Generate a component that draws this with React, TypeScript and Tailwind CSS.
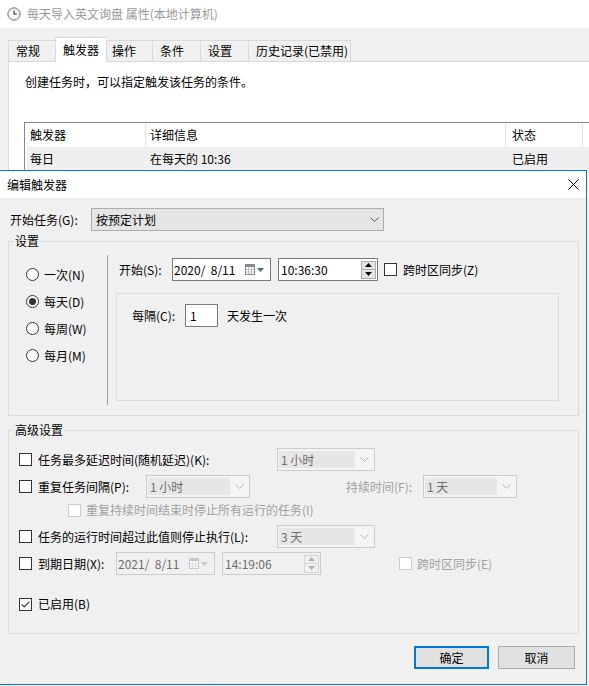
import React from "react";

const TABS = [
  { label: "常规", cls: "w-[47px] pl-[7px] border-l" },
  { label: "触发器", cls: "w-[51px] pl-[7px] border-l", active: true },
  { label: "操作", cls: "w-[46px] pl-[5px] border-l" },
  { label: "条件", cls: "w-[48px] pl-[7px] border-l" },
  { label: "设置", cls: "w-[48px] pl-[7px] border-l" },
  { label: "历史记录(已禁用)", cls: "w-[103px] pl-[7px] border-l border-r" },
];

const RADIOS = [
  { label: "一次(N)" },
  { label: "每天(D)", checked: true },
  { label: "每周(W)" },
  { label: "每月(M)" },
];

function ClockIcon() {
  return (
    <svg width="14" height="14" viewBox="0 0 14 14" className="shrink-0">
      <circle cx="7" cy="7" r="6.2" fill="#e9e3d6" stroke="#7d7d7d" />
      <circle cx="7" cy="7" r="4.6" fill="#ffffff" />
      <path d="M7 3.4V7H9.8" fill="none" stroke="#222222" strokeWidth="1.1" />
    </svg>
  );
}

function Chevron({ disabled }: { disabled?: boolean }) {
  return (
    <svg width="9" height="5" viewBox="0 0 9 5" className="shrink-0">
      <path d="M0.5 0.5L4.5 4.5L8.5 0.5" fill="none" stroke={disabled ? "#b4b4b4" : "#5a5a5a"} />
    </svg>
  );
}

function Check({ checked, disabled, className = "" }: { checked?: boolean; disabled?: boolean; className?: string }) {
  return (
    <span
      className={`w-[13px] h-[13px] border bg-white flex items-center justify-center shrink-0 ${
        disabled ? "border-[#cccccc]" : "border-[#333333]"
      } ${className}`}
    >
      {checked && (
        <svg width="9" height="7" viewBox="0 0 9 7">
          <path d="M0.6 3.4L3.2 6L8.4 0.6" fill="none" stroke="#333333" strokeWidth="1.1" />
        </svg>
      )}
    </span>
  );
}

function Radio({ checked }: { checked?: boolean }) {
  return (
    <span className="w-[13px] h-[13px] rounded-full border border-[#333333] bg-white flex items-center justify-center shrink-0">
      {checked && <span className="w-[7px] h-[7px] rounded-full bg-[#333333]" />}
    </span>
  );
}

function Combo({ value, width, disabled }: { value: string; width: string; disabled?: boolean }) {
  return (
    <div className={`${width} h-[23px] border border-[#cccccc] bg-[#f4f4f4] flex items-center py-[2px] pl-[1px] shrink-0`}>
      <div className="flex-1 h-full bg-[#e6e6e6] text-[#6d6d6d] flex items-center pl-[2px]">{value}</div>
      <div className="w-[19px] flex items-center justify-center">
        <Chevron disabled={disabled} />
      </div>
    </div>
  );
}

function CalIcon({ disabled }: { disabled?: boolean }) {
  const s = disabled ? "#c8c8c8" : "#8a8a8a";
  const g = disabled ? "#dedede" : "#b9c2cf";
  return (
    <svg width="10" height="11" viewBox="0 0 10 11" className="shrink-0">
      <rect x="0.5" y="0.5" width="9" height="10" fill="#ffffff" stroke={s} />
      <rect x="1" y="1" width="8" height="2" fill={s} />
      <path d="M3.5 3V10M6.5 3V10M1 5.5H9M1 8H9" stroke={g} />
    </svg>
  );
}

function DateBox({ value, disabled }: { value: string; disabled?: boolean }) {
  return (
    <div
      className={`w-[99px] h-[23px] border flex items-center pl-[1px] pr-[6px] shrink-0 ${
        disabled ? "border-[#cccccc] bg-[#f0f0f0] text-[#6d6d6d]" : "border-[#7a7a7a] bg-white"
      }`}
    >
      <span className="flex-1 whitespace-pre">{value}</span>
      <CalIcon disabled={disabled} />
      <svg width="7" height="4" viewBox="0 0 7 4" className="ml-[2px] shrink-0">
        <path d="M0 0H7L3.5 4Z" fill={disabled ? "#c8c8c8" : "#4e6a94"} />
      </svg>
    </div>
  );
}

function Spin({ disabled }: { disabled?: boolean }) {
  const b = disabled ? "border-[#d5d5d5] bg-[#f0f0f0]" : "border-[#adadad] bg-[#e5e5e5]";
  const f = disabled ? "#b0b0b0" : "#000000";
  return (
    <div className="flex flex-col w-[15px] shrink-0">
      <div className={`h-[9px] border ${b} flex items-center justify-center`}>
        <svg width="7" height="4" viewBox="0 0 7 4">
          <path d="M0 4L3.5 0L7 4Z" fill={f} />
        </svg>
      </div>
      <div className={`h-[9px] border border-t-0 ${b} flex items-center justify-center`}>
        <svg width="7" height="4" viewBox="0 0 7 4">
          <path d="M0 0H7L3.5 4Z" fill={f} />
        </svg>
      </div>
    </div>
  );
}

function TimeBox({ value, disabled, className = "" }: { value: string; disabled?: boolean; className?: string }) {
  return (
    <div
      className={`h-[23px] border flex items-center pl-[2px] pr-[1px] shrink-0 ${
        disabled ? "border-[#cccccc] bg-[#f0f0f0] text-[#6d6d6d]" : "border-[#7a7a7a] bg-white"
      } ${className}`}
    >
      <span className="flex-1">{value}</span>
      <Spin disabled={disabled} />
    </div>
  );
}

function BackgroundWindow() {
  return (
    <div className="flex flex-col h-full">
      <div className="h-[28px] shrink-0 bg-white flex items-center pl-[7px] gap-[6px] text-[#999999]">
        <ClockIcon />
        <span>每天导入英文询盘 属性(本地计算机)</span>
      </div>
      <div className="mt-[9px] h-[24px] shrink-0 flex items-end pl-[8px]">
        {TABS.map((t) => (
          <div
            key={t.label}
            className={`${t.cls} border-t border-[#d9d9d9] flex items-center whitespace-nowrap ${
              t.active ? "h-[25px] -mb-px relative bg-white" : "h-[21px] bg-[#f0f0f0]"
            }`}
          >
            {t.label}
          </div>
        ))}
      </div>
      <div className="flex-1 ml-[8px] bg-white border-t border-l border-[#d9d9d9] flex flex-col">
        <p className="mt-[12px] pl-[16px]">创建任务时，可以指定触发该任务的条件。</p>
        <div className="mt-[32px] ml-[15px] border-t border-l border-[#828790]">
          <div className="h-[24px] flex">
            <div className="w-[121px] pl-[5px] border-r border-[#e5e5e5] flex items-center">触发器</div>
            <div className="w-[360px] pl-[4px] border-r border-[#e5e5e5] flex items-center">详细信息</div>
            <div className="w-[77px] pl-[6px] border-r border-[#e5e5e5] flex items-center">状态</div>
          </div>
          <div className="h-[23px] flex pl-[2px]">
            <div className="flex-1 flex bg-[#efefef]">
              <div className="w-[118px] pl-[3px] flex items-center">每日</div>
              <div className="w-[361px] pl-[5px] flex items-center">在每天的 10:36</div>
              <div className="pl-[6px] flex items-center">已启用</div>
            </div>
          </div>
        </div>
        <p className="mt-[514px]">在触发器列表中可以新建、编辑或删除触发器。</p>
      </div>
    </div>
  );
}

function TriggerDialog() {
  const off = "text-[#a0a0a0]";
  return (
    <div className="absolute left-[-1px] top-[170px] w-[588px] h-[515px] border border-[#0078d7] bg-[#f0f0f0] flex flex-col">
      <div className="h-[27px] shrink-0 bg-white flex items-center justify-between pl-[7px] pr-[7px]">
        <span>编辑触发器</span>
        <svg width="11" height="11" viewBox="0 0 11 11">
          <path d="M0.5 0.5L10.5 10.5M10.5 0.5L0.5 10.5" stroke="#000000" strokeWidth="1" />
        </svg>
      </div>

      <div className="mt-[10px] h-[23px] flex items-center pl-[10px]">
        <span className="w-[81px]">开始任务(G):</span>
        <div className="w-[293px] h-[23px] border border-[#adadad] bg-[#e5e5e5] flex items-center pl-[4px] pr-[4px]">
          <span className="flex-1">按预定计划</span>
          <Chevron />
        </div>
      </div>

      <fieldset className="mx-[8px] mt-[2px] w-[571px] border border-[#dcdcdc]">
        <legend className="ml-[4px] px-[2px]">设置</legend>
        <div className="h-[166px] flex pt-[6px] pb-[10px]">
          <div className="w-[98px] flex flex-col pt-[6px]">
            {RADIOS.map((r) => (
              <div key={r.label} className="h-[27px] flex items-center pl-[17px] gap-[5px]">
                <Radio checked={r.checked} />
                <span>{r.label}</span>
              </div>
            ))}
          </div>
          <div className="w-px bg-[#a0a0a0]" />
          <div className="flex-1 flex flex-col pt-[3px]">
            <div className="h-[23px] flex items-center">
              <span className="ml-[11px] w-[53px]">开始(S):</span>
              <DateBox value="2020/  8/11" />
              <TimeBox value="10:36:30" className="ml-[7px] w-[100px]" />
              <Check className="ml-[6px]" />
              <span className="ml-[6px]">跨时区同步(Z)</span>
            </div>
            <div className="mt-[12px] ml-[8px] w-[443px] h-[108px] border border-[#dcdcdc] pt-[10px]">
              <div className="h-[23px] flex items-center pl-[15px]">
                <span className="w-[53px]">每隔(C):</span>
                <div className="w-[33px] h-[23px] border border-[#7a7a7a] bg-white flex items-center pl-[4px]">1</div>
                <span className="ml-[9px]">天发生一次</span>
              </div>
            </div>
          </div>
        </div>
      </fieldset>

      <fieldset className="mx-[8px] mt-[6px] w-[571px] border border-[#dcdcdc] pb-[21px]">
        <legend className="ml-[4px] px-[2px]">高级设置</legend>
        <div className="mt-[10px] h-[23px] flex items-center pl-[10px]">
          <Check />
          <span className="ml-[6px] w-[239px]">任务最多延迟时间(随机延迟)(K):</span>
          <Combo value="1 小时" width="w-[98px]" disabled />
        </div>
        <div className="mt-[4px] h-[23px] flex items-center pl-[10px]">
          <Check />
          <span className="ml-[6px] w-[108px]">重复任务间隔(P):</span>
          <Combo value="1 小时" width="w-[104px]" disabled />
          <span className={`ml-[96px] w-[77px] ${off}`}>持续时间(F):</span>
          <Combo value="1 天" width="w-[94px]" disabled />
        </div>
        <div className="mt-[4px] h-[16px] flex items-center pl-[59px]">
          <Check disabled />
          <span className={`ml-[5px] ${off}`}>重复持续时间结束时停止所有运行的任务(I)</span>
        </div>
        <div className="mt-[7px] h-[23px] flex items-center pl-[10px]">
          <Check />
          <span className="ml-[6px] w-[239px]">任务的运行时间超过此值则停止执行(L):</span>
          <Combo value="3 天" width="w-[98px]" disabled />
        </div>
        <div className="mt-[4px] h-[23px] flex items-center pl-[10px]">
          <Check />
          <span className="ml-[6px] w-[78px]">到期日期(X):</span>
          <DateBox value="2021/  8/11" disabled />
          <TimeBox value="14:19:06" disabled className="ml-[7px] w-[99px]" />
          <Check disabled className="ml-[78px]" />
          <span className={`ml-[5px] ${off}`}>跨时区同步(E)</span>
        </div>
        <div className="mt-[21px] h-[16px] flex items-center pl-[10px]">
          <Check checked />
          <span className="ml-[6px]">已启用(B)</span>
        </div>
      </fieldset>

      <div className="mt-[12px] flex justify-end gap-[9px] pr-[11px]">
        <button className="w-[75px] h-[23px] border-2 border-[#0078d7] bg-[#e1e1e1] flex items-center justify-center">
          确定
        </button>
        <button className="w-[77px] h-[23px] border border-[#adadad] bg-[#e1e1e1] flex items-center justify-center">
          取消
        </button>
      </div>
    </div>
  );
}

export default function App() {
  return (
    <div className="relative w-[589px] h-[686px] overflow-hidden bg-[#f0f0f0] font-['Noto_Sans_CJK_SC',sans-serif] text-[12px] leading-[16px] text-black">
      <BackgroundWindow />
      <TriggerDialog />
    </div>
  );
}
